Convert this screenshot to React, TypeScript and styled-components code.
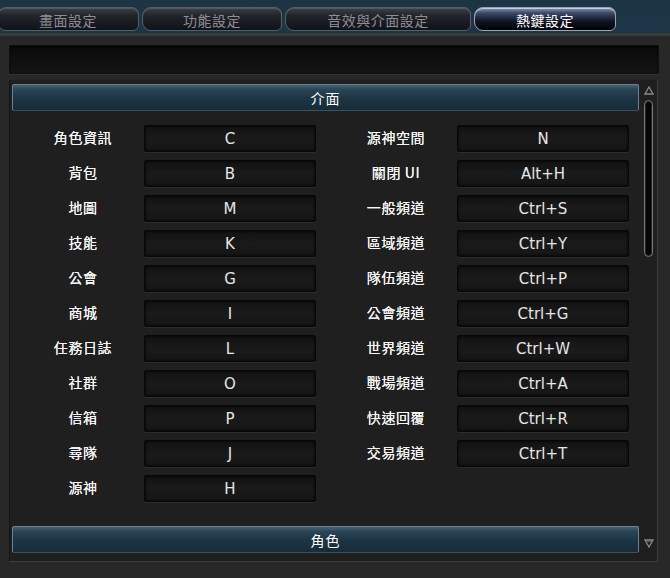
import React from 'react';
import styled, { createGlobalStyle } from 'styled-components';

const GlobalStyle = createGlobalStyle`
  html, body {
    margin: 0;
    padding: 0;
    background: #1e3b4b;
  }
  * {
    box-sizing: border-box;
  }
`

const Screen = styled.div`
  width: 670px;
  height: 578px;
  display: flex;
  flex-direction: column;
  overflow: hidden;
  background: linear-gradient(180deg, #1b3545 0%, #1f3e50 100%);
  font-family: 'Noto Sans CJK TC', 'Noto Sans', sans-serif;
`

const TabBar = styled.div`
  display: flex;
  gap: 3px;
  height: 33px;
  padding-top: 7px;
  margin-left: -3px;
`

const Tab = styled.div<{ $active?: boolean; $w: number }>`
  width: ${p => p.$w}px;
  height: 24px;
  display: flex;
  align-items: center;
  justify-content: center;
  font-size: 14px;
  line-height: 1;
  letter-spacing: 0.5px;
  color: ${p => (p.$active ? '#ffffff' : '#8e8e92')};
  border: 1px solid ${p => (p.$active ? '#9aa3b5' : '#5a5d66')};
  border-radius: 9px 7px 6px 9px / 9px 7px 6px 9px;
  background: ${p =>
    p.$active
      ? 'linear-gradient(180deg, #8a97b4 0%, #3d4a6a 22%, #101626 60%, #000000 100%)'
      : 'linear-gradient(180deg, #3e4048 0%, #22242c 35%, #101218 100%)'};
  box-shadow: inset 0 1px 0 ${p => (p.$active ? '#c5cde0' : '#55575e')};
  padding-top: 2px;
`

const Panel = styled.div`
  flex: 1;
  display: flex;
  flex-direction: column;
  gap: 6px;
  padding: 9px 12px 0 9px;
  background: #282828;
  border-top: 3px solid #3a3a3a;
  min-height: 0;
`

const SearchBar = styled.div`
  height: 29px;
  flex-shrink: 0;
  margin-right: -1px;
  background: linear-gradient(180deg, #0a0a0a 0%, #151515 100%);
  border: 1px solid #101010;
  box-shadow: 0 1px 0 #333, inset 0 1px 2px #000;
`

const Frame = styled.div`
  height: 482px;
  flex-shrink: 0;
  display: flex;
  padding: 4px 0 0 2px;
  background: #1f1f1f;
  border-left: 1px solid #141414;
  border-right: 1px solid #3c3c3c;
  border-bottom: 1px solid #3e3e3e;
  overflow: hidden;
`

const Content = styled.div`
  width: 628px;
  display: flex;
  flex-direction: column;
`

const SectionHeader = styled.div`
  height: 27px;
  flex-shrink: 0;
  display: flex;
  align-items: center;
  justify-content: center;
  color: #ffffff;
  font-size: 14px;
  line-height: 1;
  letter-spacing: 1px;
  border: 1px solid #6c8090;
  border-bottom-color: #3c5060;
  border-radius: 2px;
  background: linear-gradient(180deg, #46606f 0%, #2a4556 18%, #1c3444 55%, #172c3a 100%);
`

const KeyGrid = styled.div`
  display: grid;
  grid-template-columns: 122px 172px 141px 172px;
  row-gap: 8px;
  padding-left: 10px;
  margin: 14px 0 24px;
`

const Label = styled.div<{ $indent?: boolean }>`
  height: 27px;
  display: flex;
  align-items: center;
  justify-content: center;
  padding-left: ${p => (p.$indent ? 19 : 0)}px;
  padding-bottom: 3px;
  color: #f6f6f6;
  font-size: 14px;
  line-height: 1;
  letter-spacing: 0.6px;
  text-shadow: 0 0 0.6px #ffffff;
`

const KeyBox = styled.div`
  height: 27px;
  display: flex;
  align-items: center;
  justify-content: center;
  padding-top: 1px;
  color: #e6e6e6;
  font-family: 'DejaVu Sans', 'Liberation Sans', sans-serif;
  font-size: 15px;
  line-height: 1;
  background: linear-gradient(180deg, #121212 0%, #1a1a1a 50%, #151515 100%);
  border: 1px solid #070707;
  border-radius: 2px;
  box-shadow: inset 0 0 3px #000, 0 1px 0 #2c2c2c;
`

const Empty = styled.div``

const ScrollColumn = styled.div`
  width: 18px;
  display: flex;
  flex-direction: column;
  align-items: center;
  padding: 0 0 0 1px;
`

const ArrowBox = styled.div<{ $gap: number }>`
  height: 12px;
  margin-top: ${p => p.$gap}px;
  display: flex;
  align-items: center;
  justify-content: center;
`

const Thumb = styled.div`
  width: 9px;
  height: 157px;
  margin-top: 3px;
  border: 1px solid #7a7a7a;
  border-radius: 5px;
  background: #050505;
  box-shadow: inset 0 0 0 1px #222;
`

const Spacer = styled.div`
  flex: 1;
`

const UpArrow = () => (
  <svg width="10" height="10" viewBox="0 0 10 10">
    <path d="M5 1 L9 8 L1 8 Z" fill="none" stroke="#8a8a8a" strokeWidth="1.3" />
  </svg>
);

const DownArrow = () => (
  <svg width="10" height="10" viewBox="0 0 10 10">
    <path d="M1 2 L9 2 L5 9 Z" fill="none" stroke="#8a8a8a" strokeWidth="1.3" />
    <path d="M3 3.5 L7 3.5" stroke="#5a5a5a" strokeWidth="1" />
  </svg>
);

const leftKeys: [string, string][] = [
  ['角色資訊', 'C'],
  ['背包', 'B'],
  ['地圖', 'M'],
  ['技能', 'K'],
  ['公會', 'G'],
  ['商城', 'I'],
  ['任務日誌', 'L'],
  ['社群', 'O'],
  ['信箱', 'P'],
  ['尋隊', 'J'],
  ['源神', 'H'],
];

const rightKeys: [string, string][] = [
  ['源神空間', 'N'],
  ['關閉 UI', 'Alt+H'],
  ['一般頻道', 'Ctrl+S'],
  ['區域頻道', 'Ctrl+Y'],
  ['隊伍頻道', 'Ctrl+P'],
  ['公會頻道', 'Ctrl+G'],
  ['世界頻道', 'Ctrl+W'],
  ['戰場頻道', 'Ctrl+A'],
  ['快速回覆', 'Ctrl+R'],
  ['交易頻道', 'Ctrl+T'],
];

const tabs = [
  { name: '畫面設定', w: 142 },
  { name: '功能設定', w: 140 },
  { name: '音效與介面設定', w: 186 },
  { name: '熱鍵設定', w: 142, active: true },
];

const App: React.FC = () => {
  return (
    <>
      <GlobalStyle />
      <Screen>
        <TabBar>
          {tabs.map(t => (
            <Tab key={t.name} $w={t.w} $active={t.active}>
              {t.name}
            </Tab>
          ))}
        </TabBar>
        <Panel>
          <SearchBar />
          <Frame>
            <Content>
              <SectionHeader>介面</SectionHeader>
              <KeyGrid>
                {leftKeys.map((row, i) => (
                  <React.Fragment key={row[0]}>
                    <Label>{row[0]}</Label>
                    <KeyBox>{row[1]}</KeyBox>
                    {rightKeys[i] ? (
                      <>
                        <Label $indent>{rightKeys[i][0]}</Label>
                        <KeyBox>{rightKeys[i][1]}</KeyBox>
                      </>
                    ) : (
                      <>
                        <Empty />
                        <Empty />
                      </>
                    )}
                  </React.Fragment>
                ))}
              </KeyGrid>
              <SectionHeader>角色</SectionHeader>
            </Content>
            <ScrollColumn>
              <ArrowBox $gap={1}>
                <UpArrow />
              </ArrowBox>
              <Thumb />
              <Spacer />
              <ArrowBox $gap={0}>
                <DownArrow />
              </ArrowBox>
              <ArrowBox $gap={0} />
            </ScrollColumn>
          </Frame>
        </Panel>
      </Screen>
    </>
  );
};

export default App;
